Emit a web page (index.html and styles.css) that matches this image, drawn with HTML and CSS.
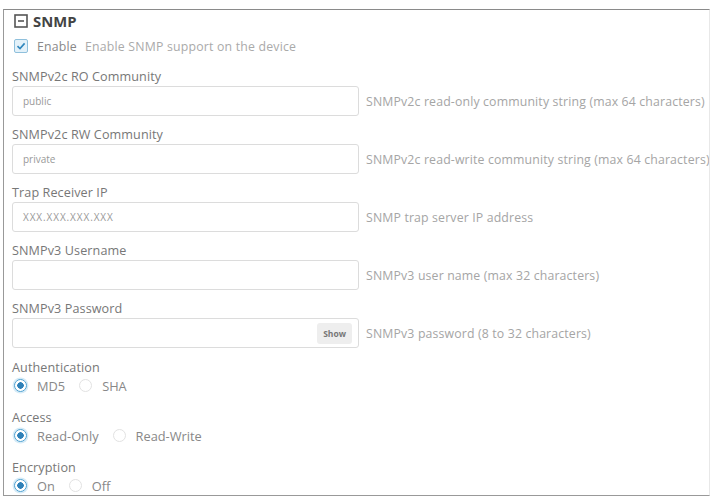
FILE: index.html
```html
<!DOCTYPE html>
<html>
<head>
<meta charset="utf-8">
<link rel="stylesheet" href="styles.css">
</head>
<body>
<div class="panel">
  <div class="header">
    <svg class="collapse" width="14" height="14" viewBox="0 0 14 14"><rect x="1" y="1" width="12" height="12" fill="none" stroke="#555" stroke-width="1.6"/><line x1="4" y1="7" x2="10" y2="7" stroke="#555" stroke-width="1.6"/></svg>
    <span class="title">SNMP</span>
  </div>
  <div class="enable">
    <span class="check"><svg width="10" height="10" viewBox="0 0 10 10"><path d="M1.5 5.2 L4 7.6 L8.6 2.4" fill="none" stroke="#2f86bd" stroke-width="1.6"/></svg></span>
    <span class="enable-label">Enable</span>
    <span class="enable-desc">Enable SNMP support on the device</span>
  </div>

  <div class="field">
    <div class="label">SNMPv2c RO Community</div>
    <div class="row">
      <div class="input"><span class="ph">public</span></div>
      <div class="desc">SNMPv2c read-only community string (max 64 characters)</div>
    </div>
  </div>
  <div class="field">
    <div class="label">SNMPv2c RW Community</div>
    <div class="row">
      <div class="input"><span class="ph">private</span></div>
      <div class="desc">SNMPv2c read-write community string (max 64 characters)</div>
    </div>
  </div>
  <div class="field">
    <div class="label">Trap Receiver IP</div>
    <div class="row">
      <div class="input"><span class="ph ip">XXX.XXX.XXX.XXX</span></div>
      <div class="desc">SNMP trap server IP address</div>
    </div>
  </div>
  <div class="field">
    <div class="label">SNMPv3 Username</div>
    <div class="row">
      <div class="input"></div>
      <div class="desc">SNMPv3 user name (max 32 characters)</div>
    </div>
  </div>
  <div class="field">
    <div class="label">SNMPv3 Password</div>
    <div class="row">
      <div class="input pw"><span class="show">Show</span></div>
      <div class="desc">SNMPv3 password (8 to 32 characters)</div>
    </div>
  </div>

  <div class="group">
    <div class="label">Authentication</div>
    <div class="radios">
      <span class="radio on"></span><span class="rlabel">MD5</span>
      <span class="radio"></span><span class="rlabel">SHA</span>
    </div>
  </div>
  <div class="group">
    <div class="label">Access</div>
    <div class="radios">
      <span class="radio on"></span><span class="rlabel">Read-Only</span>
      <span class="radio"></span><span class="rlabel">Read-Write</span>
    </div>
  </div>
  <div class="group">
    <div class="label">Encryption</div>
    <div class="radios">
      <span class="radio on"></span><span class="rlabel">On</span>
      <span class="radio"></span><span class="rlabel">Off</span>
    </div>
  </div>
</div>
</body>
</html>
```
FILE: styles.css
```css
html, body {
  margin: 0;
  padding: 0;
  background: #fff;
}
body {
  font-family: "Open Sans", "Liberation Sans", sans-serif;
  color: #777;
}
.panel {
  margin: 9px 0 0 3px;
  width: 707px;
  height: 487px;
  border: 1px solid #999;
  border-top-color: #8a8a8a;
  border-right-color: #e8e8e8;
  box-sizing: border-box;
  padding: 0 0 0 8px;
  overflow: hidden;
}
.header {
  display: flex;
  align-items: center;
  height: 20px;
  margin-top: 1px;
  padding-left: 2px;
}
.collapse {
  display: block;
}
.title {
  margin-left: 5px;
  font-weight: 700;
  font-size: 14.8px;
  color: #444;
}
.enable {
  display: flex;
  align-items: center;
  margin-top: 7px;
  height: 16px;
  padding-left: 2px;
  font-size: 12.3px;
  letter-spacing: 0.2px;
}
.check {
  width: 14px;
  height: 14px;
  box-sizing: border-box;
  border: 1px solid #8fc0dc;
  background: #e3f1f9;
  border-radius: 2px;
  display: flex;
  align-items: center;
  justify-content: center;
}
.enable-label {
  margin-left: 9px;
  color: #888;
}
.enable-desc {
  margin-left: 8px;
  color: #aaa;
}
.field {
  margin-top: 14px;
}
.field + .field {
  margin-top: 10px;
}
.label {
  font-size: 12.6px;
  letter-spacing: 0.1px;
  color: #777;
  height: 17px;
  line-height: 17px;
}
.row {
  display: flex;
  align-items: center;
  margin-top: 1px;
}
.input {
  flex: 0 0 347px;
  width: 347px;
  height: 30px;
  box-sizing: border-box;
  border: 1px solid #dcdcdc;
  border-radius: 3px;
  display: flex;
  align-items: center;
  padding-left: 10px;
  font-size: 10px;
  color: #999;
}
.ph.ip {
  letter-spacing: 0.9px;
  font-size: 10px;
}
.input.pw {
  justify-content: flex-end;
  padding-right: 6px;
}
.show {
  background: #eee;
  border-radius: 3px;
  font-size: 8.5px;
  font-weight: 700;
  color: #777;
  padding: 5px 6px;
}
.desc {
  margin-left: 7px;
  font-size: 12.3px;
  letter-spacing: 0.15px;
  color: #a5a5a5;
  white-space: nowrap;
}
.group {
  margin-top: 11px;
}
.group + .group {
  margin-top: 14px;
}
.radios {
  display: flex;
  align-items: center;
  height: 19px;
  padding-left: 2px;
}
.radio {
  width: 13px;
  height: 13px;
  border-radius: 50%;
  border: 1px solid #e2e2e2;
  box-sizing: border-box;
  display: inline-block;
}
.radio.on {
  border: 1.5px solid #4a9fd0;
  background: radial-gradient(circle, #2e80b8 0, #2e80b8 3px, #fff 3.5px);
  box-shadow: 0 0 0 1.5px #d6ebf7;
}
.rlabel {
  margin-left: 10px;
  margin-right: 14px;
  font-size: 12.8px;
  color: #888;
}
```
